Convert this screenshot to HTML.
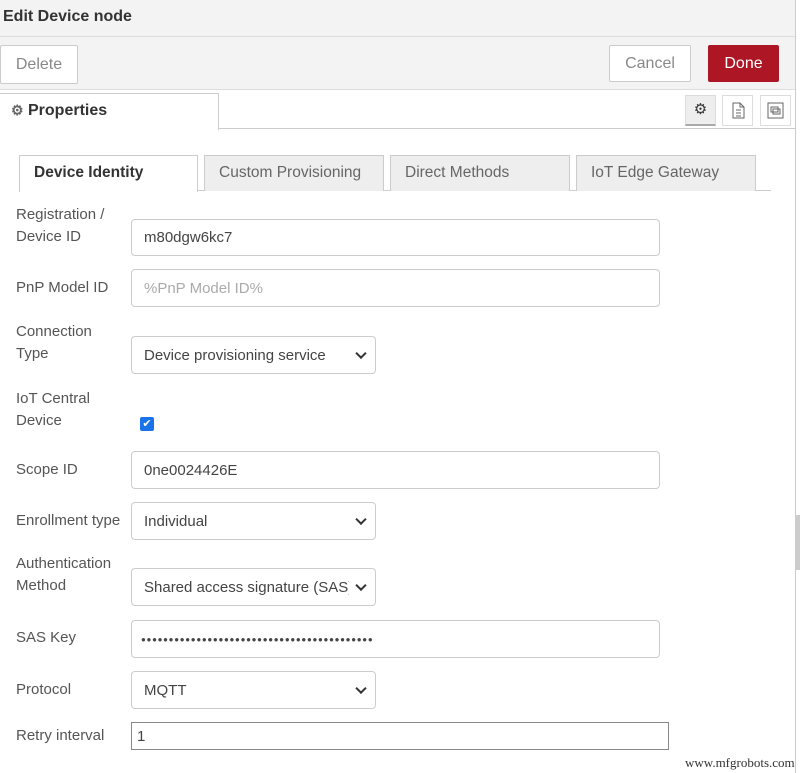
<!DOCTYPE html>
<html><head><style>
body{margin:0;width:800px;height:773px;overflow:hidden;background:#fff;font-family:"Liberation Sans",sans-serif;position:relative;color:#444}
.a{position:absolute;box-sizing:border-box}
.btn{background:#fff;border:1px solid #ccc;border-radius:2px;font-size:16px;color:#888;text-align:center}
.lbl{font-size:15px;color:#555;line-height:22px;left:16px}
.in{left:131px;border:1px solid #ccc;border-radius:4px;font-size:15px;color:#444;padding-left:12px;display:flex;align-items:center;background:#fff}
.sel:after{content:"";position:absolute;right:10px;top:50%;width:6px;height:6px;border-right:2px solid #333;border-bottom:2px solid #333;transform:translateY(-70%) rotate(45deg)}
.tab{top:155px;height:36px;border:1px solid #ccc;border-bottom:none;background:#eee;font-size:15.5px;color:#666;padding-left:14px;line-height:33px}
.ib{top:95px;width:31px;height:31px;border:1px solid #ddd;background:#fff}
</style></head><body>
<div class="a" style="left:0;top:0;width:795px;height:37px;background:#f3f3f3;border-bottom:1px solid #ddd"></div>
<div class="a" style="left:3px;top:8px;font-size:16px;font-weight:bold;color:#333">Edit Device node</div>
<div class="a" style="left:0;top:37px;width:795px;height:53px;background:#f3f3f3;border-bottom:1px solid #ddd"></div>
<div class="a btn" style="left:0;top:45px;width:78px;height:39px;line-height:37px">Delete</div>
<div class="a btn" style="left:609px;top:45px;width:82px;height:37px;line-height:35px">Cancel</div>
<div class="a btn" style="left:708px;top:45px;width:71px;height:37px;line-height:35px;background:#ad1625;border-color:#ad1625;color:#fff">Done</div>
<div class="a" style="left:0;top:93px;width:219px;height:37px;border:1px solid #ccc;border-left:none;border-bottom:none;background:#fff"></div>
<div class="a" style="left:218px;top:128px;width:577px;height:1px;background:#ccc"></div>
<div class="a" style="left:11px;top:102px;font-size:16px;font-weight:bold;color:#333"><span style="color:#666;font-size:14px">⚙</span> Properties</div>
<div class="a ib" style="left:685px;background:#eee;border-bottom:2px solid #aaa;text-align:center;line-height:28px;font-size:15px;color:#333">⚙</div>
<div class="a ib" style="left:722px"><svg width="29" height="29"><path d="M10 7h7l4 4v11H10z M17 7v4h4 M13 14h5 M13 17h5 M13 20h5" fill="none" stroke="#666" stroke-width="1"/></svg></div>
<div class="a ib" style="left:760px"><svg width="29" height="29"><rect x="7" y="7" width="15" height="15" fill="none" stroke="#666"/><rect x="10" y="11" width="7" height="5" fill="none" stroke="#666"/><rect x="12" y="13" width="7" height="5" fill="none" stroke="#666"/></svg></div>
<div class="a" style="left:795px;top:0;width:1px;height:773px;background:#ccc"></div>
<div class="a" style="left:796px;top:515px;width:4px;height:55px;background:#ccc"></div>

<div class="a" style="left:19px;top:190px;width:752px;height:1px;background:#ccc"></div>
<div class="a tab" style="left:19px;width:179px;background:#fff;height:37px;font-weight:bold;color:#333">Device Identity</div>
<div class="a tab" style="left:204px;width:180px">Custom Provisioning</div>
<div class="a tab" style="left:390px;width:180px">Direct Methods</div>
<div class="a tab" style="left:576px;width:180px">IoT Edge Gateway</div>

<div class="a lbl" style="top:204px">Registration /<br>Device ID</div>
<div class="a in" style="top:219px;width:529px;height:37px">m80dgw6kc7</div>
<div class="a lbl" style="top:277px">PnP Model ID</div>
<div class="a in" style="top:269px;width:529px;height:38px;color:#aaa">%PnP Model ID%</div>
<div class="a lbl" style="top:321px">Connection<br>Type</div>
<div class="a in sel" style="top:336px;width:245px;height:38px">Device provisioning service</div>
<div class="a lbl" style="top:388px">IoT Central<br>Device</div>
<div class="a" style="left:140px;top:417px;width:14px;height:14px;background:#1a73e8;border-radius:2px;color:#fff;font-size:11px;line-height:14px;text-align:center">✔</div>
<div class="a lbl" style="top:459px">Scope ID</div>
<div class="a in" style="top:451px;width:529px;height:38px">0ne0024426E</div>
<div class="a lbl" style="top:510px">Enrollment type</div>
<div class="a in sel" style="top:502px;width:245px;height:38px">Individual</div>
<div class="a lbl" style="top:553px">Authentication<br>Method</div>
<div class="a in sel" style="top:568px;width:245px;height:38px;overflow:hidden;white-space:nowrap"><span style="display:inline-block;width:205px;overflow:hidden">Shared access signature (SAS)</span></div>
<div class="a lbl" style="top:627px">SAS Key</div>
<div class="a in" style="top:620px;width:529px;height:38px;font-size:8px;letter-spacing:0.7px;padding-left:9px">●●●●●●●●●●●●●●●●●●●●●●●●●●●●●●●●●●●●●●●●●●</div>
<div class="a lbl" style="top:679px">Protocol</div>
<div class="a in sel" style="top:671px;width:245px;height:38px">MQTT</div>
<div class="a lbl" style="top:725px">Retry interval</div>
<div class="a in" style="top:722px;width:538px;height:28px;border-radius:0;border-color:#888;padding-left:5px">1</div>
<div class="a" style="left:685px;top:755px;font-family:'Liberation Serif',serif;font-size:13px;color:#333">www.mfgrobots.com</div>
</body></html>
